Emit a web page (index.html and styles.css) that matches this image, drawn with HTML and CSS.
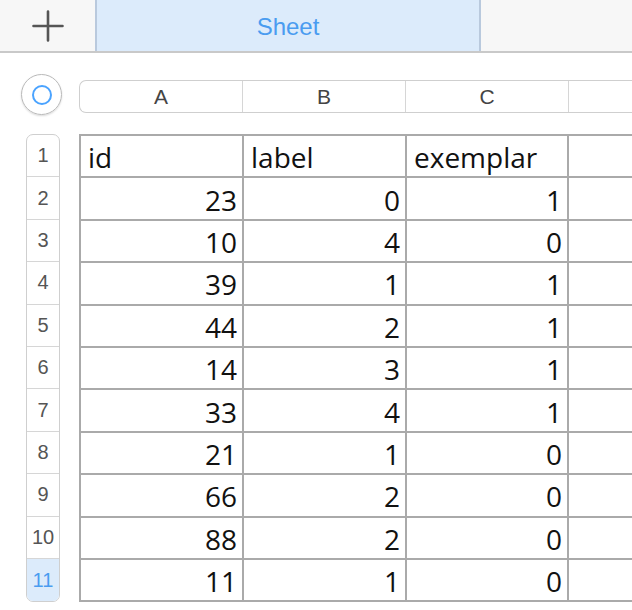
FILE: index.html
```html
<!DOCTYPE html>
<html>
<head>
<meta charset="utf-8">
<link rel="stylesheet" href="styles.css">
</head>
<body>
<div class="tabbar">
  <div class="add"><svg width="32" height="32" viewBox="0 0 32 32"><path d="M16 1.5V30.5M1.5 16H30.5" stroke="#555" stroke-width="2.6" stroke-linecap="round"/></svg></div>
  <div class="tab">Sheet</div>
  <div class="rest"></div>
</div>
<div class="body">
  <div class="corner"><div class="selall"><div class="ring"></div></div></div>
  <div class="colheads">
    <div class="ch">A</div><div class="ch">B</div><div class="ch">C</div><div class="ch last"></div>
  </div>
  <div class="rowheads">
    <div class="rh">1</div><div class="rh">2</div><div class="rh">3</div><div class="rh">4</div><div class="rh">5</div><div class="rh">6</div><div class="rh">7</div><div class="rh">8</div><div class="rh">9</div><div class="rh">10</div><div class="rh sel">11</div>
  </div>
  <div class="grid">
    <div class="c">id</div><div class="c">label</div><div class="c">exemplar</div><div class="c e"></div>
    <div class="c n">23</div><div class="c n">0</div><div class="c n">1</div><div class="c e"></div>
    <div class="c n">10</div><div class="c n">4</div><div class="c n">0</div><div class="c e"></div>
    <div class="c n">39</div><div class="c n">1</div><div class="c n">1</div><div class="c e"></div>
    <div class="c n">44</div><div class="c n">2</div><div class="c n">1</div><div class="c e"></div>
    <div class="c n">14</div><div class="c n">3</div><div class="c n">1</div><div class="c e"></div>
    <div class="c n">33</div><div class="c n">4</div><div class="c n">1</div><div class="c e"></div>
    <div class="c n">21</div><div class="c n">1</div><div class="c n">0</div><div class="c e"></div>
    <div class="c n">66</div><div class="c n">2</div><div class="c n">0</div><div class="c e"></div>
    <div class="c n">88</div><div class="c n">2</div><div class="c n">0</div><div class="c e"></div>
    <div class="c n">11</div><div class="c n">1</div><div class="c n">0</div><div class="c e"></div>
  </div>
</div>
</body>
</html>
```
FILE: styles.css
```css
html, body { margin: 0; padding: 0; background: #fff; overflow: hidden; }
body { width: 632px; height: 610px; font-family: "Liberation Sans", Arial, sans-serif; }

.tabbar {
  display: flex;
  height: 51px;
  background: #f7f7f7;
  border-bottom: 2px solid #c9c9c9;
}
.add { width: 95px; display: flex; align-items: center; justify-content: center; }
.tab {
  width: 386px;
  background: #dcebfb;
  border-left: 2px solid #b9c9dd;
  border-right: 2px solid #b9c9dd;
  color: #4a9cf0;
  font-size: 24px;
  padding-top: 3px;
  box-sizing: border-box;
  display: flex; align-items: center; justify-content: center;
}
.rest { flex: 1; }

.body {
  display: grid;
  grid-template-columns: 79px 553px;
  grid-template-rows: 81px 1fr;
}
.corner { display: flex; justify-content: flex-start; align-items: flex-start; padding: 21px 0 0 21px; }
.selall {
  width: 41px; height: 41px; border-radius: 50%;
  border: 1px solid #b9b9b9;
  box-shadow: 0 1px 2px rgba(0,0,0,0.15);
  display: flex; align-items: center; justify-content: center;
  box-sizing: border-box;
}
.ring { width: 16px; height: 16px; border: 2px solid #4aa3ff; border-radius: 50%; }

.colheads {
  display: flex;
  margin-top: 27px;
  height: 33px;
  box-sizing: border-box;
  border: 1px solid #cfcfcf;
  border-right: none;
  border-radius: 7px 0 0 7px;
  width: 553px;
}
.ch {
  width: 162px; flex: none;
  border-right: 1px solid #d6d6d6;
  display: flex; align-items: center; justify-content: center;
  font-size: 21px; color: #444;
}
.ch.last { border-right: none; flex: 1; }

.rowheads {
  margin-left: 26px;
  width: 34px;
  box-sizing: border-box;
  border: 1px solid #cfcfcf;
  border-radius: 7px;
  overflow: hidden;
  align-self: start;
}
.rh {
  height: 42.4px;
  box-sizing: border-box;
  border-bottom: 1px solid #d6d6d6;
  display: flex; align-items: center; justify-content: center;
  font-size: 20px; color: #555;
}
.rh:last-child { border-bottom: none; }
.rh.sel { background: #dcebfb; color: #4a9cf0; }

.grid {
  display: grid;
  grid-template-columns: 163px 163px 162px 63px;
  grid-auto-rows: 42.4px;
  border-left: 2px solid #aaa;
  border-top: 2px solid #aaa;
  width: 553px;
  box-sizing: border-box;
  align-self: start;
}
.c {
  border-right: 2px solid #aaa;
  border-bottom: 2px solid #aaa;
  font-family: "Open Sans", sans-serif;
  font-size: 28px;
  color: #111;
  display: flex; align-items: center;
  padding: 2px 5px 0 7px;
  box-sizing: border-box;
  white-space: nowrap;
  overflow: hidden;
}
.c.n { justify-content: flex-end; }
.c.e { border-right: none; }
```
